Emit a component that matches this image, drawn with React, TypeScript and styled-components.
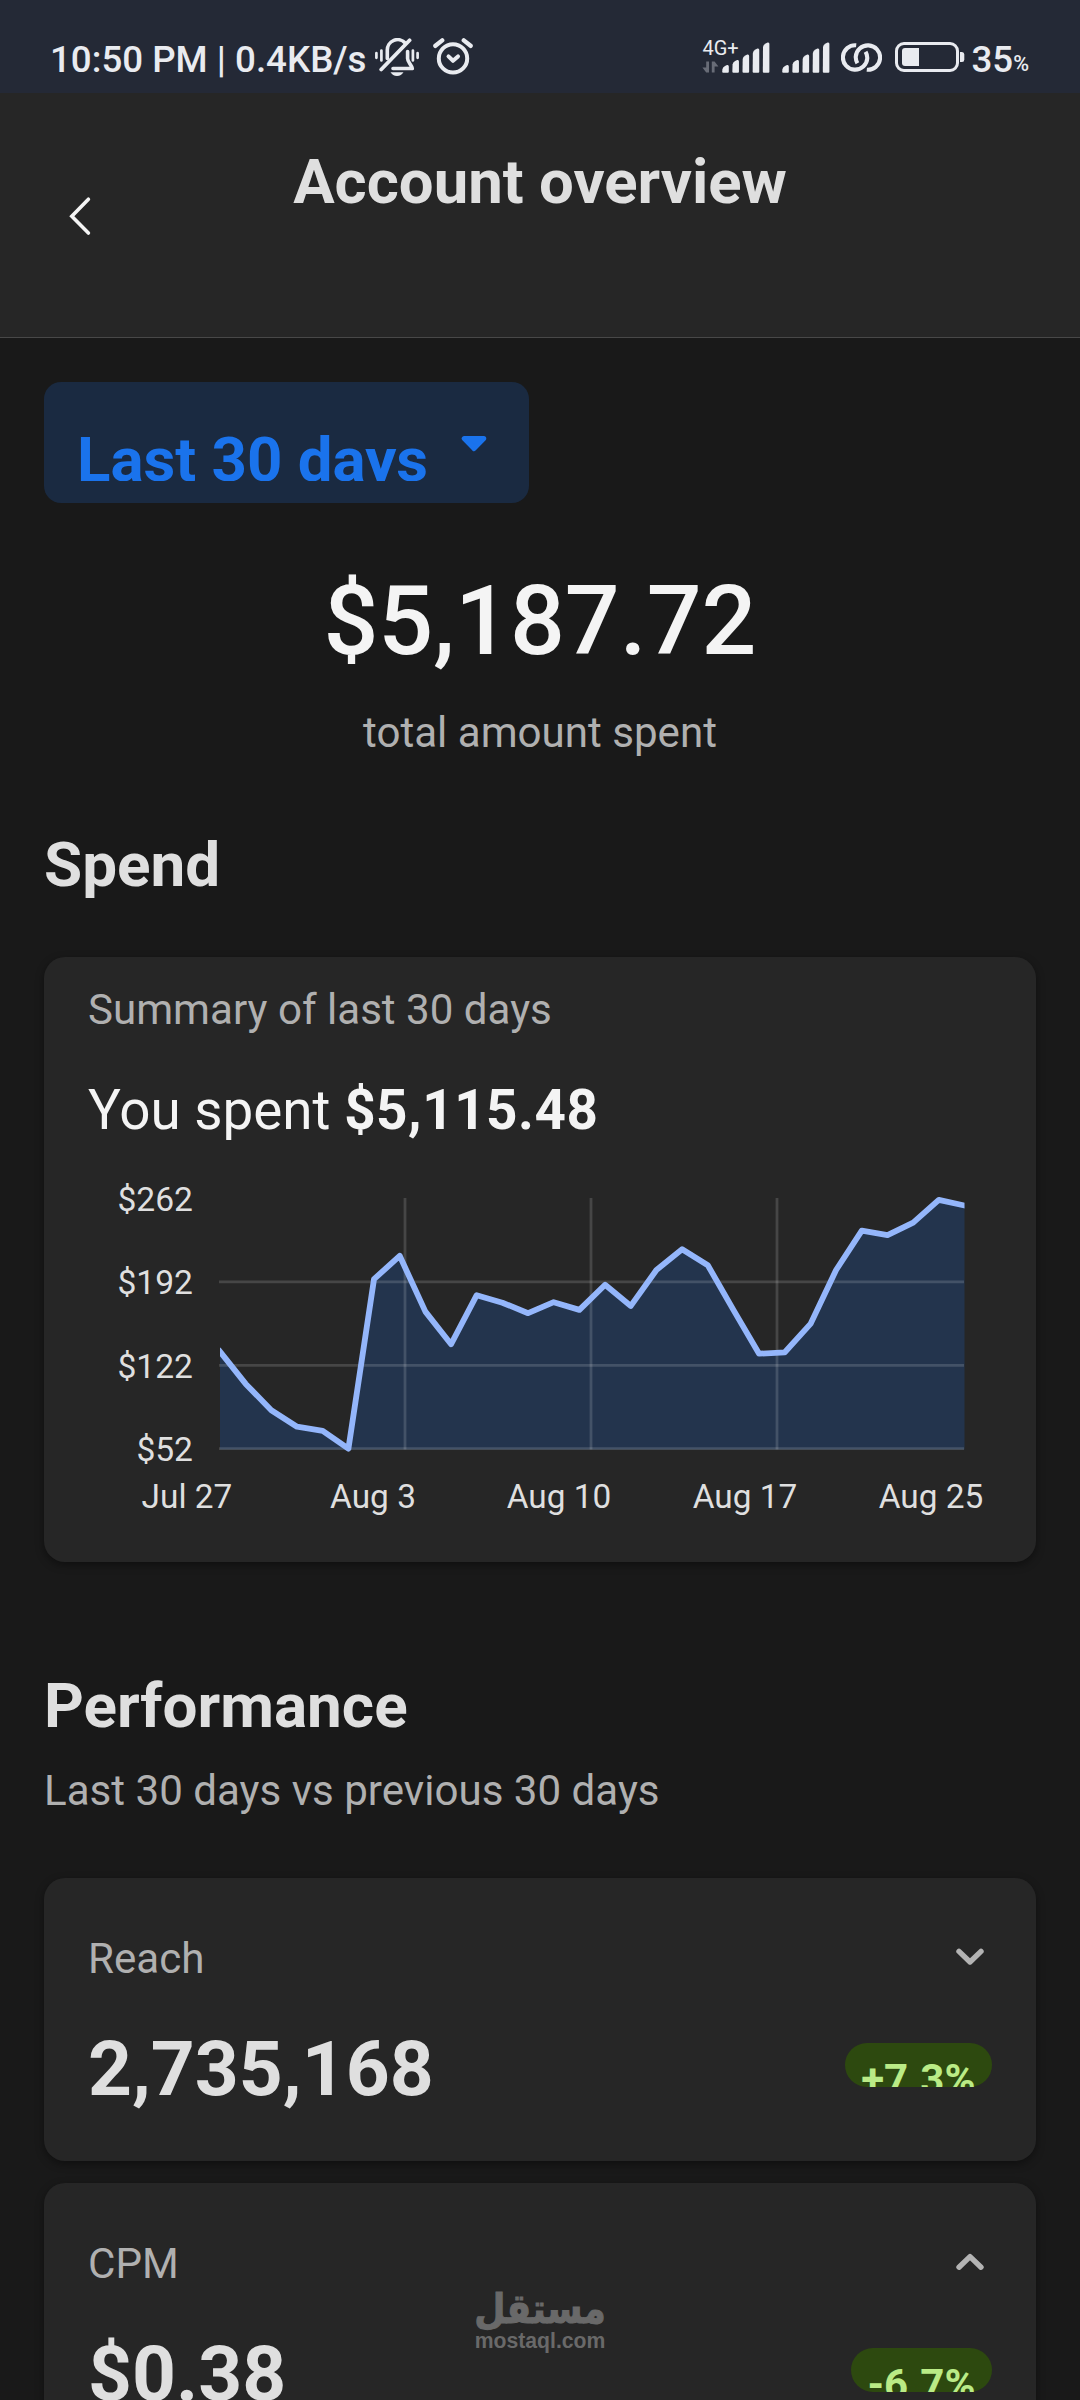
import React from 'react';
import styled, { createGlobalStyle } from 'styled-components';

const GlobalStyle = createGlobalStyle`
  * { box-sizing: border-box; }
  html, body { margin: 0; padding: 0; background: #191919; }
  body { overflow: hidden; }
`;

const Screen = styled.div`
  position: relative;
  width: 1080px;
  height: 2400px;
  overflow: hidden;
  background: #191919;
  font-family: Roboto, 'Liberation Sans', sans-serif;
  color: #dfdfdf;
  white-space: nowrap;
  svg { display: block; flex: none; }
`;

/* Status bar */
const StatusBar = styled.div`
  display: flex;
  justify-content: space-between;
  height: 93px;
  padding: 36px 51px 0 50px;
  background: #242936;
  color: #e9ebf0;
`;
const StatusGroup = styled.div`
  display: flex;
  align-items: flex-start;
`;
const StatusText = styled.span`
  font-size: 36.7px;
  font-weight: 500;
  line-height: 44px;
  margin-top: 2px;
`;
const StatusIcon = styled.div<{ $left: number; $top: number }>`
  margin-left: ${(p) => p.$left}px;
  margin-top: ${(p) => p.$top}px;
`;
const Network = styled.div`
  display: flex;
  flex-direction: column;
  width: 20px;
  overflow: visible;
`;
const NetworkType = styled.span`
  font-size: 20px;
  line-height: 24px;
  height: 25px;
`;
const Percent = styled.span`
  font-size: 21.5px;
  font-weight: 500;
  line-height: 26px;
  margin-top: 15px;
`;

/* Header */
const Header = styled.header`
  display: grid;
  grid-template-columns: 160px 1fr 160px;
  align-items: center;
  height: 245px;
  background: #262626;
  border-bottom: 1px solid #484848;
`;
const BackButton = styled.div`
  padding: 1px 0 0 68px;
`;
const Title = styled.h1`
  align-self: start;
  margin: 53px 0 0;
  text-align: center;
  font-size: 61.7px;
  line-height: 72px;
  font-weight: 700;
`;

/* Body */
const Content = styled.main`
  display: flex;
  flex-direction: column;
  padding: 44px 44px 0;
`;
const RangeButton = styled.div`
  display: flex;
  align-items: flex-start;
  justify-content: space-between;
  width: 485px;
  height: 121px;
  padding: 42px 42px 0 33px;
  border-radius: 17px;
  background: #1a2a41;
`;
const RangeLabel = styled.span`
  height: 57px;
  overflow: hidden;
  font-size: 61.8px;
  line-height: 72px;
  font-weight: 700;
  color: #1a73ec;
`;
const RangeCaret = styled.div`
  margin-top: 11px;
`;
const Total = styled.div`
  margin-top: 63px;
  text-align: center;
  font-size: 96.7px;
  line-height: 110px;
  font-weight: 500;
  color: #f4f4f4;
`;
const Muted = styled.div<{ $top?: number; $center?: boolean }>`
  margin-top: ${(p) => p.$top ?? 0}px;
  text-align: ${(p) => (p.$center ? 'center' : 'left')};
  font-size: 42.1px;
  line-height: 50px;
  color: #b0b0b0;
`;
const SectionTitle = styled.h2<{ $top: number }>`
  margin: ${(p) => p.$top}px 0 0;
  font-size: 62px;
  line-height: 72px;
  font-weight: 700;
`;
const Card = styled.section<{ $top: number; $padTop: number; $height: number }>`
  flex: none;
  height: ${(p) => p.$height}px;
  margin-top: ${(p) => p.$top}px;
  padding: ${(p) => p.$padTop}px 44px 0;
  border-radius: 21px;
  background: #262626;
  box-shadow: 0 3px 9px rgba(0, 0, 0, 0.4);
`;
const SpentLine = styled.div`
  margin-top: 43px;
  font-size: 54.8px;
  line-height: 64px;
  color: #f4f4f4;
  b { font-weight: 700; letter-spacing: 0.55px; }
`;
const ChartRow = styled.div`
  display: flex;
  height: 290px;
  margin-top: 38px;
`;
const YAxis = styled.div`
  display: flex;
  flex-direction: column;
  justify-content: space-between;
  width: 105px;
  margin-right: 26px;
  text-align: right;
  font-size: 33.6px;
  line-height: 40px;
`;
const Plot = styled.div`
  padding-top: 10px;
`;
const XAxis = styled.div`
  display: grid;
  grid-template-columns: repeat(5, 186px);
  margin: 7px -32px 0 6px;
  text-align: center;
  font-size: 33.4px;
  line-height: 40px;
`;
const MetricHead = styled.div`
  display: flex;
  align-items: flex-start;
  justify-content: space-between;
  padding-right: 7px;
`;
const MetricBody = styled.div`
  display: flex;
  align-items: flex-start;
  justify-content: space-between;
  margin-top: 40px;
`;
const MetricValue = styled.span`
  font-size: 76.7px;
  line-height: 90px;
  font-weight: 700;
`;
const ChevronBox = styled.div`
  padding-top: 13px;
`;
const Badge = styled.div`
  height: 44px;
  margin-top: 19px;
  padding: 12px 16.5px 0;
  border-radius: 22px;
  background: #2d490f;
`;
const BadgeText = styled.div`
  height: 32px;
  overflow: hidden;
  font-size: 42px;
  line-height: 50px;
  font-weight: 700;
  color: #baeb86;
`;

/* Watermark lying over the cards */
const Watermark = styled.div`
  position: absolute;
  left: 475px;
  top: 2284px;
  width: 130px;
  display: flex;
  flex-direction: column;
  align-items: center;
  color: #696969;
`;
const WatermarkArabic = styled.span`
  font-family: 'DejaVu Sans', sans-serif;
  font-size: 36px;
  font-weight: 700;
  line-height: 50px;
  transform: scaleY(1.15);
  -webkit-text-stroke: 0.9px #696969;
`;
const WatermarkLatin = styled.span`
  font-family: 'Liberation Sans', Arial, sans-serif;
  font-size: 21.2px;
  font-weight: 700;
  line-height: 26px;
  margin-top: -6px;
`;

const MutedBell = () => (
  <svg width="44" height="38" viewBox="0 0 44 38" fill="none" stroke="currentColor" strokeLinecap="round" strokeLinejoin="round">
    <path d="M12.3 20.5V12.5A10.4 10.4 0 0 1 30.5 5.2" strokeWidth="3.6" />
    <path d="M34.6 2.3L6.2 31.5" strokeWidth="3.8" />
    <path d="M32.6 13.5V20.5C32.6 24.5 36.5 26.5 37.3 30.5H18" strokeWidth="3.6" />
    <path d="M15.5 34.2H28.5C27 36.6 25 38 22 38S17 36.6 15.5 34.2Z" fill="currentColor" stroke="none" />
    <path d="M1.4 15.2V19.8M6.4 12.6V22.4M37.9 12.6V22.4M42.6 15.2V19.8" strokeWidth="2.7" />
  </svg>
);

const Alarm = () => (
  <svg width="40" height="37" viewBox="0 0 40 37" fill="none" stroke="currentColor" strokeLinecap="round" strokeLinejoin="round">
    <circle cx="20" cy="20.4" r="14.2" strokeWidth="4" />
    <path d="M2.4 7.8L9.2 2.4M30.8 2.4L37.6 7.8" strokeWidth="4.4" />
    <path d="M15.5 18.4L20 22.8L25 18.4" strokeWidth="4" />
  </svg>
);

const BAR_TOPS = [22.5, 17.5, 12, 6, 0];
const Signal = () => (
  <svg width="48" height="31" viewBox="0 0 48 31" fill="currentColor">
    {BAR_TOPS.map((t, i) => {
      const x = i * 10.15;
      return (
        <path key={i} d={`M${x + 0.4} ${t + 5}Q${x + 0.6} ${t + 3} ${x + 3} ${t + 1.6}L${x + 5} ${t + 0.5}Q${x + 6.8} ${t} ${x + 6.8} ${t + 2}V29.7Q${x + 6.8} 30.7 ${x + 5.8} 30.7H${x + 1.2}Q${x + 0.2} 30.7 ${x + 0.2} 29.7Z`} />
      );
    })}
  </svg>
);

const DataArrows = () => (
  <svg width="17" height="12" viewBox="0 0 17 12" fill="#686c77">
    <path d="M4.2 0.5H7V11.5H4.2L0.4 6.6H4.2ZM9.8 0.5H12.6L16.4 5.6H12.6V11.5H9.8Z" />
  </svg>
);

const LinkRings = () => (
  <svg width="41" height="29" viewBox="0 0 41 28.6" fill="none" stroke="currentColor" strokeWidth="4.1">
    <path d="M15.2 2.1A12.2 12.2 0 1 0 26.3 14.8Q26.2 11.5 24.6 8.6" />
    <path d="M25.8 26.5A12.2 12.2 0 1 0 14.7 13.8Q14.8 17.1 16.4 20" />
  </svg>
);

const Battery = () => (
  <svg width="70" height="30" viewBox="0 0 70 30">
    <rect x="1.5" y="1.5" width="61" height="27" rx="7.5" fill="none" stroke="currentColor" strokeWidth="3" />
    <path d="M10 6H24V24H10Q7 24 7 21V9Q7 6 10 6Z" fill="currentColor" />
    <path d="M65 10H67Q69.3 10 69.3 12.5V17.5Q69.3 20 67 20H65Z" fill="currentColor" />
  </svg>
);

const Chevron = ({ up }: { up?: boolean }) => (
  <svg width="30" height="20" viewBox="0 0 30 20" fill="none" stroke="#b3b3b3" strokeWidth="5.4" strokeLinecap="round" strokeLinejoin="round">
    <path d={up ? 'M4 15.2L15 4.6L26 15.2' : 'M4 4.4L15 15L26 4.4'} />
  </svg>
);

const SPEND = [
  133.5, 106.4, 84.3, 70.5, 67, 52, 194.3, 214, 167.1, 139.7, 180.9, 174.6, 165.8, 175, 168.5,
  189.7, 171.9, 202, 219.5, 206.1, 168.5, 131.8, 132.9, 156.8, 202, 235, 231.3, 241.8, 261, 256.2,
];

const SpendChart = () => {
  const py = (v: number) => 258.7 - (v - 52) * 1.191;
  const points = SPEND.map((v, i) => `${(1 + (i * 744.5) / 29).toFixed(1)},${py(v).toFixed(1)}`).join(' ');
  return (
    <svg width="746" height="266" viewBox="0 0 746 266">
      <clipPath id="plotArea"><rect x="1" y="0" width="744.5" height="266" /></clipPath>
      <polygon points={`1,259.5 ${points} 745.5,259.5`} fill="#23344d" />
      <g stroke="#ffffff" strokeOpacity="0.15" strokeWidth="2.8">
        {[192, 122, 52].map((v) => <path key={v} d={`M0 ${py(v)}H745`} />)}
        {[186, 372, 558].map((x) => <path key={x} d={`M${x} 8V259.5`} />)}
      </g>
      <polyline points={points} fill="none" stroke="#94b6fb" strokeWidth="5.8" strokeLinejoin="round" strokeLinecap="square" clipPath="url(#plotArea)" />
    </svg>
  );
};

type MetricProps = { label: string; value: string; change: string; up?: boolean; top: number };
const Metric = ({ label, value, change, up, top }: MetricProps) => (
  <Card $top={top} $padTop={56} $height={283}>
    <MetricHead>
      <Muted>{label}</Muted>
      <ChevronBox><Chevron up={up} /></ChevronBox>
    </MetricHead>
    <MetricBody>
      <MetricValue>{value}</MetricValue>
      <Badge><BadgeText>{change}</BadgeText></Badge>
    </MetricBody>
  </Card>
);

export default function App() {
  return (
    <Screen>
      <GlobalStyle />
      <StatusBar>
        <StatusGroup>
          <StatusText>10:50 PM | 0.4KB/s</StatusText>
          <StatusIcon $left={9} $top={2}><MutedBell /></StatusIcon>
          <StatusIcon $left={14} $top={2}><Alarm /></StatusIcon>
        </StatusGroup>
        <StatusGroup>
          <Network>
            <NetworkType>4G+</NetworkType>
            <DataArrows />
          </Network>
          <StatusIcon $left={0} $top={6}><Signal /></StatusIcon>
          <StatusIcon $left={12} $top={6}><Signal /></StatusIcon>
          <StatusIcon $left={11} $top={6.5}><LinkRings /></StatusIcon>
          <StatusIcon $left={13} $top={6}><Battery /></StatusIcon>
          <StatusIcon $left={6} $top={0}><StatusText as="div">35</StatusText></StatusIcon>
          <Percent>%</Percent>
        </StatusGroup>
      </StatusBar>

      <Header>
        <BackButton>
          <svg width="24" height="40" viewBox="0 0 24 40" fill="none" stroke="#f4f4f4" strokeWidth="3.6" strokeLinecap="round" strokeLinejoin="miter">
            <path d="M20.4 3.2L3.8 20.2L20.4 37" />
          </svg>
        </BackButton>
        <Title>Account overview</Title>
      </Header>

      <Content>
        <RangeButton>
          <RangeLabel>Last 30 days</RangeLabel>
          <RangeCaret>
            <svg width="26" height="17" viewBox="0 0 26 17" fill="#1a73ec" stroke="#1a73ec" strokeWidth="5" strokeLinejoin="round">
              <path d="M3.2 3.5H22.8L13 13.6Z" />
            </svg>
          </RangeCaret>
        </RangeButton>
        <Total>$5,187.72</Total>
        <Muted $top={32} $center>total amount spent</Muted>

        <SectionTitle $top={71}>Spend</SectionTitle>
        <Card $top={56} $padTop={28} $height={605}>
          <Muted>Summary of last 30 days</Muted>
          <SpentLine>You spent <b>$5,115.48</b></SpentLine>
          <ChartRow>
            <YAxis>
              <span>$262</span>
              <span>$192</span>
              <span>$122</span>
              <span>$52</span>
            </YAxis>
            <Plot><SpendChart /></Plot>
          </ChartRow>
          <XAxis>
            <span>Jul 27</span>
            <span>Aug 3</span>
            <span>Aug 10</span>
            <span>Aug 17</span>
            <span>Aug 25</span>
          </XAxis>
        </Card>

        <SectionTitle $top={108}>Performance</SectionTitle>
        <Muted $top={24}>Last 30 days vs previous 30 days</Muted>
        <Metric top={62} label="Reach" value="2,735,168" change="+7.3%" />
        <Metric top={22} label="CPM" value="$0.38" change="-6.7%" up />
      </Content>

      <Watermark>
        <WatermarkArabic lang="ar" dir="rtl">مستقل</WatermarkArabic>
        <WatermarkLatin>mostaql.com</WatermarkLatin>
      </Watermark>
    </Screen>
  );
}
